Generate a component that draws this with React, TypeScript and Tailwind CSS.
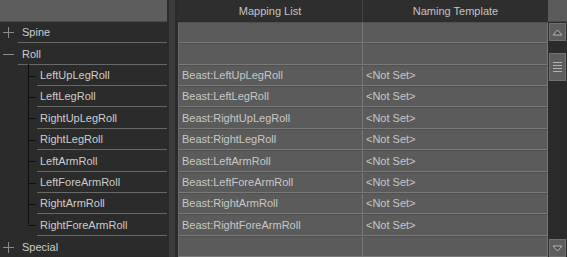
import React from "react";

type Row = { label: string; level: 0 | 1; sign?: "+" | "-"; map?: string; tmpl?: string; h: number };

const rows: Row[] = [
  { label: "Spine", level: 0, sign: "+", h: 21 },
  { label: "Roll", level: 0, sign: "-", h: 22 },
  { label: "LeftUpLegRoll", level: 1, map: "Beast:LeftUpLegRoll", tmpl: "<Not Set>", h: 21 },
  { label: "LeftLegRoll", level: 1, map: "Beast:LeftLegRoll", tmpl: "<Not Set>", h: 21 },
  { label: "RightUpLegRoll", level: 1, map: "Beast:RightUpLegRoll", tmpl: "<Not Set>", h: 22 },
  { label: "RightLegRoll", level: 1, map: "Beast:RightLegRoll", tmpl: "<Not Set>", h: 21 },
  { label: "LeftArmRoll", level: 1, map: "Beast:LeftArmRoll", tmpl: "<Not Set>", h: 22 },
  { label: "LeftForeArmRoll", level: 1, map: "Beast:LeftForeArmRoll", tmpl: "<Not Set>", h: 21 },
  { label: "RightArmRoll", level: 1, map: "Beast:RightArmRoll", tmpl: "<Not Set>", h: 21 },
  { label: "RightForeArmRoll", level: 1, map: "Beast:RightForeArmRoll", tmpl: "<Not Set>", h: 22 },
  { label: "Special", level: 0, sign: "+", h: 21 },
];

const font = { fontFamily: '"Liberation Sans", Arial, sans-serif' };

function Sign({ s }: { s: "+" | "-" }) {
  return (
    <div className="relative w-[11px] h-[11px] ml-[3px] mr-[8px] shrink-0">
      <div className="absolute left-0 top-[5px] w-[11px] h-[1px] bg-[#8c8c8c]" />
      {s === "+" && <div className="absolute left-[5px] top-0 w-[1px] h-[11px] bg-[#8c8c8c]" />}
    </div>
  );
}

function Separator() {
  return (
    <div className="flex h-full shrink-0">
      <div className="w-[2px] bg-[#2b2b2b]" />
      <div className="w-[6px] bg-[#3b3b3b]" />
      <div className="w-[3px] bg-[#2b2b2b]" />
    </div>
  );
}

export default function App() {
  return (
    <div className="w-[567px] h-[257px] bg-[#2b2b2b] flex overflow-hidden text-[11px]" style={font}>
      <div className="w-[548px] flex flex-col shrink-0">
        <div className="flex h-[22px] shrink-0">
          <div className="w-[167px] bg-[#5d5d5d] border-b border-[#4a4a4a] shrink-0" />
          <Separator />
          <div className="w-[185px] bg-[#2e2e2e] text-[#c4c4c4] flex items-center justify-center border-r border-[#444] shrink-0">
            Mapping List
          </div>
          <div className="w-[185px] bg-[#2e2e2e] text-[#c4c4c4] flex items-center justify-center shrink-0">
            Naming Template
          </div>
        </div>
        {rows.map((r, i) => {
          const last = i === rows.length - 1;
          const isChild = r.level === 1;
          const lastChild = r.label === "RightForeArmRoll";
          return (
            <div key={r.label} className="flex shrink-0" style={{ height: last ? undefined : r.h, flexGrow: last ? 1 : 0 }}>
              <div className="w-[167px] shrink-0 relative flex flex-col">
                <div className="flex-1 flex items-center text-[#cdcdcd] pt-[1px]">
                  {isChild ? (
                    <>
                      <div className="relative w-[38px] h-full shrink-0">
                        <div
                          className="absolute left-[28px] top-[-2px] w-[1px] bg-[#0e0e0e]"
                          style={{ height: lastChild ? "55%" : "calc(100% + 2px)" }}
                        />
                        <div className="absolute left-[28px] top-1/2 w-[8px] h-[1px] bg-[#0e0e0e]" />
                      </div>
                      <span className="pl-[2px]">{r.label}</span>
                    </>
                  ) : (
                    <>
                      <Sign s={r.sign!} />
                      <span>{r.label}</span>
                    </>
                  )}
                </div>
                {!last && <div className={`h-[1px] bg-[#686868] ${isChild ? "ml-[37px]" : "ml-[18px]"}`} />}
              </div>
              <Separator />
              <div className="w-[185px] shrink-0 bg-[#5b5b5b] border-l border-[#6a6a6a] border-r border-r-[#777] border-b border-b-[#7a7a7a] border-t border-t-[#505050] flex items-center text-[#c8c8c8] pl-[3px]">
                {r.map}
              </div>
              <div className="w-[185px] shrink-0 bg-[#5b5b5b] border-r border-[#777] border-b border-b-[#7a7a7a] border-t border-t-[#505050] flex items-center text-[#c8c8c8] pl-[3px]">
                {r.tmpl}
              </div>
            </div>
          );
        })}
      </div>
      <div className="w-[19px] flex flex-col shrink-0 bg-[#2b2b2b]">
        <div className="h-[22px] bg-[#5b5b5b] border-b border-[#4a4a4a] shrink-0" />
        <div className="h-[18px] mx-[1px] mt-[1px] bg-[#5d5d5d] border border-[#707070] flex items-center justify-center shrink-0">
          <svg width="11" height="7" viewBox="0 0 11 7">
            <path d="M5.5 1 L10 6 L1 6 Z" fill="#4f4f4f" stroke="#b4b4b4" strokeWidth="1" />
          </svg>
        </div>
        <div className="h-[12px] shrink-0" />
        <div className="h-[28px] mx-[1px] bg-[#5d5d5d] border border-[#707070] flex flex-col items-center justify-center gap-[2px] shrink-0">
          <div className="w-[9px] h-[1px] bg-[#b0b0b0]" />
          <div className="w-[9px] h-[1px] bg-[#b0b0b0]" />
          <div className="w-[9px] h-[1px] bg-[#b0b0b0]" />
          <div className="w-[9px] h-[1px] bg-[#b0b0b0]" />
        </div>
        <div className="flex-1" />
        <div className="h-[18px] mx-[1px] bg-[#5d5d5d] border border-[#707070] flex items-center justify-center shrink-0">
          <svg width="11" height="7" viewBox="0 0 11 7">
            <path d="M1 1 L10 1 L5.5 6 Z" fill="#4f4f4f" stroke="#b4b4b4" strokeWidth="1" />
          </svg>
        </div>
      </div>
    </div>
  );
}
